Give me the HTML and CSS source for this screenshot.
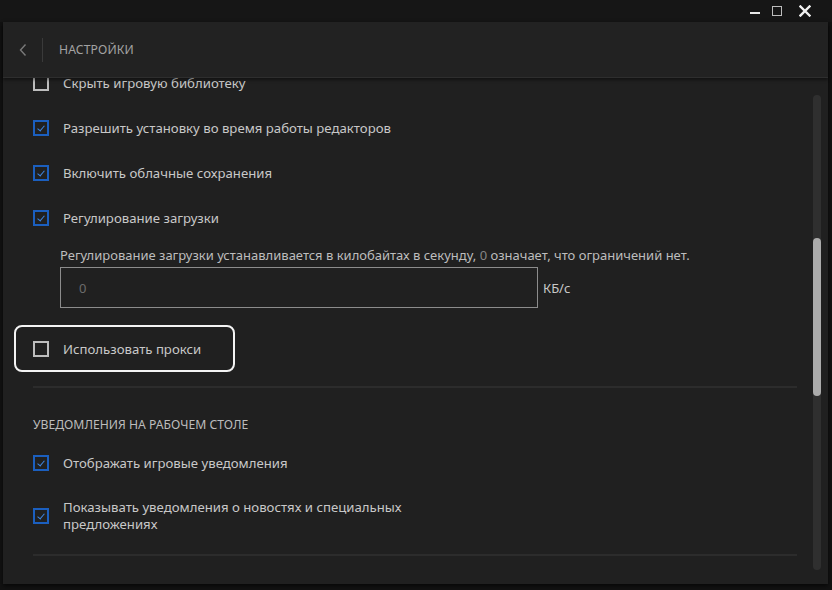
FILE: index.html
```html
<!DOCTYPE html>
<html lang="ru">
<head>
  <meta charset="UTF-8" />
  <title>Настройки</title>
  <link rel="stylesheet" href="styles.css">
</head>
<body>
  <div class="window">
    <div class="titlebar">
      <span class="tb-btn tb-min"></span>
      <span class="tb-btn tb-max"></span>
      <svg class="tb-btn tb-close" width="12" height="12" viewBox="0 0 12 12">
        <path d="M1.5 1.5 L10.5 10.5 M10.5 1.5 L1.5 10.5" stroke="#f2f2f2" stroke-width="2.4" stroke-linecap="square"/>
      </svg>
    </div>

    <div class="panel">
      <div class="header">
        <svg class="back" width="10" height="14" viewBox="0 0 10 14">
          <path d="M7.5 1.5 L2.5 7 L7.5 12.5" fill="none" stroke="#7a7a7a" stroke-width="1.4"/>
        </svg>
        <span class="sep"></span>
        <span class="title">НАСТРОЙКИ</span>
      </div>

      <div class="content">
        <div class="list">
          <label class="row">
            <span class="box"></span>
            <span class="label">Скрыть игровую библиотеку</span>
          </label>
          <label class="row">
            <span class="box checked"></span>
            <span class="label">Разрешить установку во время работы редакторов</span>
          </label>
          <label class="row">
            <span class="box checked"></span>
            <span class="label">Включить облачные сохранения</span>
          </label>
          <label class="row">
            <span class="box checked"></span>
            <span class="label">Регулирование загрузки</span>
          </label>

          <div class="throttle">
            <p class="hint">Регулирование загрузки устанавливается в килобайтах в секунду, <span class="zero">0</span> означает, что ограничений нет.</p>
            <div class="speed">
              <div class="field">0</div>
              <span class="unit">КБ/с</span>
            </div>
          </div>

          <label class="row proxy">
            <span class="box"></span>
            <span class="label">Использовать прокси</span>
          </label>

          <div class="divider"></div>

          <h3 class="section">УВЕДОМЛЕНИЯ НА РАБОЧЕМ СТОЛЕ</h3>
          <label class="row">
            <span class="box checked"></span>
            <span class="label">Отображать игровые уведомления</span>
          </label>
          <label class="row tall">
            <span class="box checked"></span>
            <span class="label">Показывать уведомления о новостях и специальных<br>предложениях</span>
          </label>

          <div class="divider"></div>
        </div>

        <div class="scrollbar"><div class="thumb"></div></div>
      </div>
    </div>
  </div>
</body>
</html>
```

FILE: styles.css
```css
body {
  margin: 0;
  background-color: #0f0f0f;
  font-family: 'Noto Sans', 'Open Sans', sans-serif;
  color: #c6c6c6;
}

.window {
  width: 832px;
  height: 590px;
  display: flex;
  flex-direction: column;
  background-color: #121212;
}

.titlebar {
  height: 22px;
  flex-shrink: 0;
  display: flex;
  align-items: center;
  justify-content: flex-end;
  background-color: #161616;
  padding-right: 21px;
}

.tb-btn {
  display: block;
  margin-left: 13px;
}

.tb-min {
  width: 10px;
  height: 2px;
  background-color: #e8e8e8;
  margin-top: 3px;
}

.tb-max {
  width: 8px;
  height: 8px;
  border: 1.5px solid #bdbdbd;
  margin-left: 12px;
}

.tb-close {
  margin-left: 17px;
}

.panel {
  flex: 1;
  display: flex;
  flex-direction: column;
  margin: 0 4px 6px 3px;
  background-color: #202020;
  box-shadow: 0 2px 4px rgba(0, 0, 0, 0.6);
  min-height: 0;
}

.header {
  height: 55px;
  flex-shrink: 0;
  display: flex;
  align-items: center;
  background-color: #222222;
  border-bottom: 1px solid #2e2e2e;
  box-shadow: 0 2px 3px rgba(0, 0, 0, 0.45);
  position: relative;
  z-index: 2;
}

.back {
  margin-left: 15px;
}

.sep {
  width: 1px;
  height: 24px;
  background-color: #3a3a3a;
  margin-left: 14px;
}

.title {
  margin-left: 16px;
  font-size: 12.2px;
  color: #a2a2a2;
  letter-spacing: 0.1px;
}

.content {
  flex: 1;
  position: relative;
  overflow: hidden;
}

.list {
  margin-top: -18px;
  padding-right: 31px;
}

.row {
  height: 45px;
  display: flex;
  align-items: center;
  padding-left: 30px;
  font-size: 13.2px;
  color: #c8c8c8;
}

.row.tall {
  height: 62px;
  line-height: 17px;
}

.box {
  width: 16px;
  height: 16px;
  box-sizing: border-box;
  flex-shrink: 0;
  border: 2px solid #bdbdbd;
  margin-right: 14px;
  position: relative;
}

.box.checked {
  border-color: #1b5fbf;
}

.box.checked::after {
  content: "";
  position: absolute;
  left: 4px;
  top: 2px;
  width: 3px;
  height: 6px;
  border-right: 1px solid #3f86e0;
  border-bottom: 1px solid #3f86e0;
  transform: rotate(40deg);
}

.throttle {
  padding-left: 57px;
  margin-top: 6px;
}

.hint {
  margin: 0;
  font-size: 13px;
  line-height: 18px;
  color: #bdbdbd;
}

.zero {
  color: #858585;
}

.speed {
  display: flex;
  align-items: center;
  margin-top: 3px;
}

.field {
  width: 458px;
  height: 39px;
  border: 1px solid #8c8c8c;
  padding-left: 18px;
  display: flex;
  align-items: center;
  font-size: 13px;
  color: #6c6c6c;
}

.unit {
  margin-left: 5px;
  font-size: 13px;
  color: #c8c8c8;
}

.row.proxy {
  box-sizing: border-box;
  width: 221px;
  height: 47px;
  margin: 17px 0 0 11px;
  padding-left: 17px;
  border: 2px solid #f4f4f4;
  border-radius: 8px;
}

.divider {
  height: 2px;
  background-color: #2c2c2c;
  margin: 14px 0 0 30px;
}

.section {
  margin: 28px 0 0 30px;
  font-size: 12.2px;
  font-weight: normal;
  line-height: 18px;
  color: #bcbcbc;
}

.section + .row {
  margin-top: 6px;
}

.row.tall + .divider {
  margin-top: 7px;
}

.scrollbar {
  position: absolute;
  right: 7px;
  top: 17px;
  width: 8px;
  height: 475px;
  border-radius: 4px;
  background-color: #2f2f2f;
}

.thumb {
  margin-top: 143px;
  height: 158px;
  border-radius: 4px;
  background-color: #ababab;
}
```
